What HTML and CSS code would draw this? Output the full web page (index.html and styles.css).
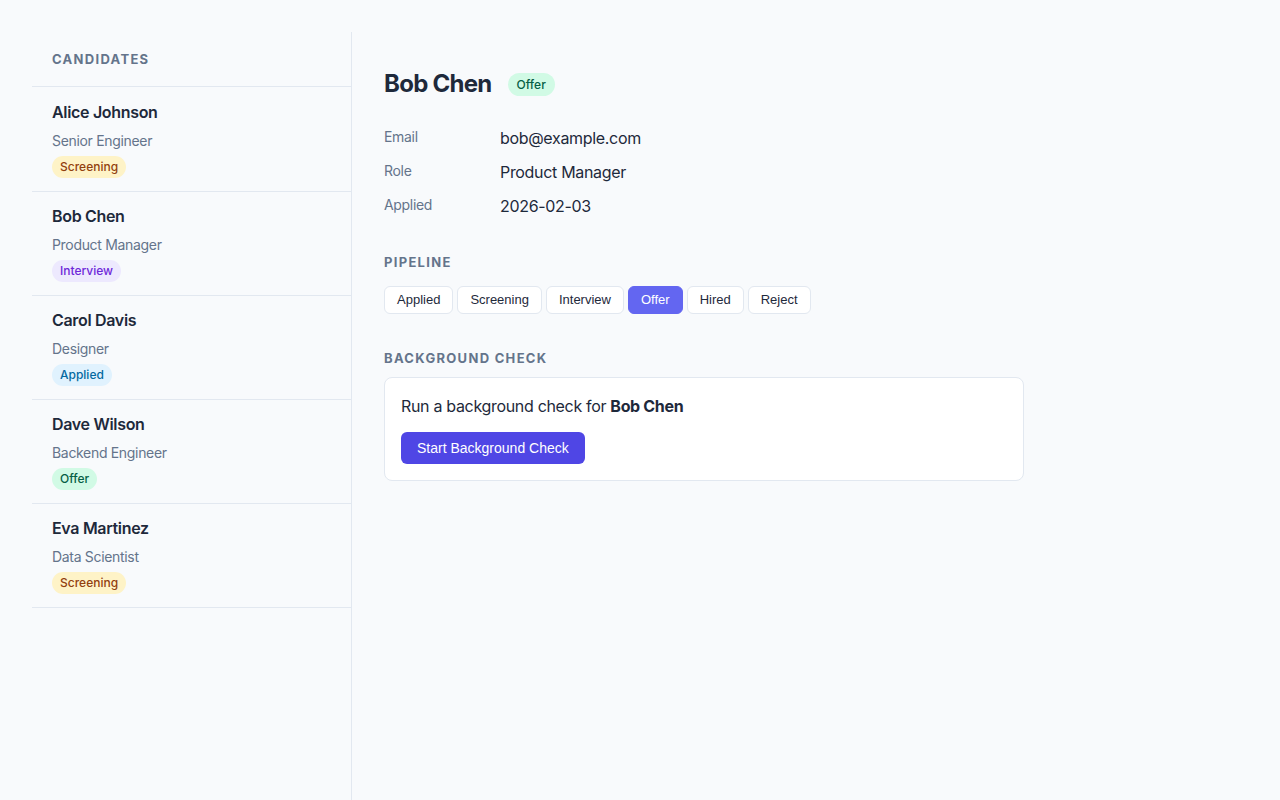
FILE: index.html
```html
<!DOCTYPE html>
<html lang="en">
<head>
<meta charset="utf-8">
<title>Candidates</title>
<link rel="stylesheet" href="styles.css">
</head>
<body>
<div class="app">
  <aside class="sidebar">
    <h2 class="sidebar-title">Candidates</h2>
    <ul class="cand-list">
      <li class="cand">
        <div class="cand-name">Alice Johnson</div>
        <div class="cand-role">Senior Engineer</div>
        <span class="badge badge-screening">Screening</span>
      </li>
      <li class="cand">
        <div class="cand-name">Bob Chen</div>
        <div class="cand-role">Product Manager</div>
        <span class="badge badge-interview">Interview</span>
      </li>
      <li class="cand">
        <div class="cand-name">Carol Davis</div>
        <div class="cand-role">Designer</div>
        <span class="badge badge-applied">Applied</span>
      </li>
      <li class="cand">
        <div class="cand-name">Dave Wilson</div>
        <div class="cand-role">Backend Engineer</div>
        <span class="badge badge-offer">Offer</span>
      </li>
      <li class="cand">
        <div class="cand-name">Eva Martinez</div>
        <div class="cand-role">Data Scientist</div>
        <span class="badge badge-screening">Screening</span>
      </li>
    </ul>
  </aside>
  <main class="detail">
    <div class="detail-head">
      <h1 class="detail-name">Bob Chen</h1>
      <span class="badge badge-offer">Offer</span>
    </div>
    <dl class="facts">
      <dt>Email</dt><dd>bob@example.com</dd>
      <dt>Role</dt><dd>Product Manager</dd>
      <dt>Applied</dt><dd>2026-02-03</dd>
    </dl>
    <h3 class="section-title section-pipeline">Pipeline</h3>
    <div class="pipeline">
      <button class="stage">Applied</button>
      <button class="stage">Screening</button>
      <button class="stage">Interview</button>
      <button class="stage stage-active">Offer</button>
      <button class="stage">Hired</button>
      <button class="stage">Reject</button>
    </div>
    <h3 class="section-title section-bg">Background Check</h3>
    <div class="card">
      <p class="card-text">Run a background check for <strong>Bob Chen</strong></p>
      <button class="primary">Start Background Check</button>
    </div>
  </main>
</div>
</body>
</html>
```
FILE: styles.css
```css
* { box-sizing: border-box; }
html, body { margin: 0; }
body {
  padding: 32px 32px 0;
  background: #f8fafc;
  font-family: Inter, "Noto Sans", sans-serif;
  color: #1e293b;
  letter-spacing: -0.02em;
}
.app {
  display: flex;
  min-height: calc(100vh - 32px);
}
.sidebar {
  width: 320px;
  flex: none;
  border-right: 1px solid #e2e8f0;
}
.sidebar-title {
  margin: 0;
  padding: 18px 20px 18px;
  font-size: 13px;
  line-height: 18px;
  font-weight: 700;
  letter-spacing: 0.1em;
  text-transform: uppercase;
  color: #64748b;
  border-bottom: 1px solid #e2e8f0;
}
.cand-list { list-style: none; margin: 0; padding: 0; }
.cand {
  padding: 14px 20px 13px;
  border-bottom: 1px solid #e2e8f0;
  display: flex;
  flex-direction: column;
  align-items: flex-start;
}
.cand:first-child { padding-top: 15px; }
.cand-name {
  font-size: 16px;
  line-height: 20px;
  font-weight: 600;
  color: #1e293b;
}
.cand-role {
  margin-top: 9px;
  font-size: 14px;
  line-height: 20px;
  color: #64748b;
}
.cand .badge { margin-top: 5px; }
.badge {
  display: inline-block;
  padding: 0 8px;
  font-size: 12px;
  line-height: 22px;
  border-radius: 999px;
  font-weight: 500;
  letter-spacing: 0;
}
.badge-screening { background: #fef3c7; color: #92400e; }
.badge-interview { background: #ede9fe; color: #6d28d9; }
.badge-applied { background: #e0f2fe; color: #0369a1; }
.badge-offer { background: #d1fae5; color: #065f46; }

.detail {
  flex: 1;
  padding: 34px 32px 32px;
}
.detail-head {
  display: flex;
  align-items: center;
  gap: 16px;
  margin-bottom: 24px;
}
.detail-name {
  margin: 0;
  font-size: 24px;
  line-height: 36px;
  font-weight: 700;
  letter-spacing: -0.03em;
  color: #1e293b;
}
.detail-head .badge { line-height: 23px; padding: 0 9px; }
.facts {
  display: grid;
  grid-template-columns: 116px 1fr;
  row-gap: 10px;
  margin: 0 0 36px;
}
.facts dt {
  font-size: 14px;
  line-height: 22px;
  padding-bottom: 2px;
  color: #64748b;
}
.facts dd {
  margin: 0;
  font-size: 16px;
  line-height: 24px;
  color: #1e293b;
}
.section-title {
  margin: 0;
  font-size: 13px;
  line-height: 16px;
  font-weight: 700;
  letter-spacing: 0.1em;
  text-transform: uppercase;
  color: #64748b;
}
.section-pipeline { margin-bottom: 16px; }
.section-bg { margin-bottom: 11px; }
.pipeline {
  display: flex;
  gap: 4px;
  margin-bottom: 36px;
}
.stage {
  font-family: "Liberation Sans", Arial, sans-serif;
  letter-spacing: 0;
  font-size: 13px;
  line-height: 16px;
  padding: 5px 12px;
  background: #fff;
  color: #1e293b;
  border: 1px solid #e2e8f0;
  border-radius: 6px;
}
.stage-active {
  background: #6366f1;
  border-color: #6366f1;
  color: #fff;
}
.card {
  width: 640px;
  background: #fff;
  border: 1px solid #e2e8f0;
  border-radius: 8px;
  padding: 16px;
}
.card-text {
  margin: 0 0 14px;
  font-size: 16px;
  line-height: 24px;
  color: #1e293b;
}
.card-text strong { font-weight: 700; }
.primary {
  font-family: "Liberation Sans", Arial, sans-serif;
  letter-spacing: 0;
  font-size: 14px;
  line-height: 16px;
  padding: 8px 16px;
  background: #4f46e5;
  color: #fff;
  border: none;
  border-radius: 6px;
}
```
